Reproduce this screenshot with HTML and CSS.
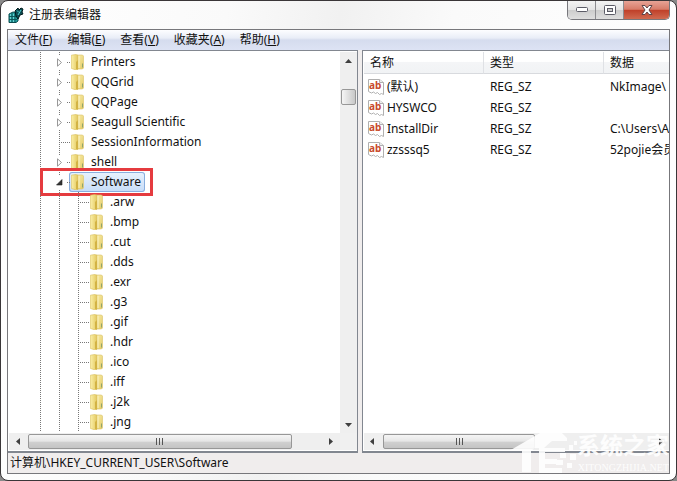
FILE: index.html
```
<!DOCTYPE html>
<html lang="zh-CN">
<head>
  <meta charset="UTF-8">
  <meta name="viewport" content="width=device-width, initial-scale=1.0">
  <title>注册表编辑器</title>
  <link rel="stylesheet" href="styles.css">
</head>
<body>
  <svg class="defs" aria-hidden="true">
    <defs>
      <linearGradient id="leaf" x1="0" x2="1" y1="0" y2="0">
        <stop offset="0" stop-color="#fbf0a8"/>
        <stop offset="1" stop-color="#e3c860"/>
      </linearGradient>
      <linearGradient id="cover" x1="0" x2="1" y1="0" y2="1">
        <stop offset="0" stop-color="#f9eeb0"/>
        <stop offset="1" stop-color="#e4cb62"/>
      </linearGradient>
      <symbol id="folder" viewBox="0 0 13 16">
        <path d="M6 1h5.500l1 1v12l-1 1H6z" fill="url(#cover)" stroke="#dcc36a" stroke-width=".6"/>
        <path d="M.4 1.200L5 .4l2 1v13.800L5 16 .4 14.400z" fill="url(#leaf)" stroke="#d8bd5a" stroke-width=".6"/>
        <path d="M5 8l2-2v9.500L5 15z" fill="#d3b344"/>
        <path d="M8 2v12" stroke="#fbf3c0"/>
        <path d="M11.500 9.500v4" stroke="#8fa56c"/>
      </symbol>
      <symbol id="string" viewBox="0 0 16 16">
        <path d="M.5.5h11l4 3v12l-2-1-2 1-2-2-2 1-2-1.500-2 1-3-1.500z" fill="#fff" stroke="#b0b0b0"/>
        <path d="M11.500.5v3h4" fill="#eee" stroke="#b0b0b0"/>
        <text x="1" y="10" class="ab">ab</text>
      </symbol>
      <symbol id="closed" viewBox="0 0 7 9">
        <path d="M1.500 .8v7.400L5.500 4.500z" fill="#fff" stroke="#989898"/>
      </symbol>
      <symbol id="open" viewBox="0 0 7 9">
        <path d="M6 1.500v5.500H.5z" fill="#333" stroke="#222" stroke-width=".6"/>
      </symbol>
    </defs>
  </svg>

  <div class="window">
    <header class="titlebar">
      <svg class="app-icon" viewBox="0 0 16 16" aria-hidden="true">
        <path d="M1 7l4-2 5 1v8l-2 1.500H1z" fill="#23a3a3" stroke="#0a4a4e"/>
        <path d="M1 9.500h8M1 12.500h8M4 6v9M7 6v9" stroke="#0a4a4e" stroke-width=".8"/>
        <path d="M2 8h1M5 8h1M2 11h1M5 11h1M2 14h1M5 14h1" stroke="#a8ffff"/>
        <path d="M7 4l3-3 1 2 2-2 2 1-1 3 1 2-3 1-2 4-2-3z" fill="#0b4e54" stroke="#001a1c"/>
        <path d="M9 3.500l2 2M13 3l-3 5" stroke="#4fd0d0"/>
      </svg>
      <h1 class="title">注册表编辑器</h1>
      <div class="controls">
        <button class="control" aria-label="最小化">
          <svg width="12" height="6" viewBox="0 0 12 6"><rect x=".5" y=".5" width="11" height="4" rx="1" fill="#fff" stroke="#5b5b66"/></svg>
        </button>
        <button class="control" aria-label="最大化">
          <svg width="12" height="10" viewBox="0 0 12 10"><rect x=".5" y=".5" width="11" height="9" rx="1" fill="#fff" stroke="#5b5b66"/><rect x="3.500" y="3.500" width="5" height="3" fill="#ccc" stroke="#5b5b66"/></svg>
        </button>
        <button class="control close" aria-label="关闭">
          <svg width="12" height="10" viewBox="0 0 12 10"><path d="M1 .5h3l2 2.500L8 .5h3L8 5l3 4.500H8L6 7 4 9.500H1L4 5z" fill="#fff" stroke="#5e4548"/></svg>
        </button>
      </div>
    </header>

    <main class="client">
      <nav class="menu">
        <button>文件(<u>F</u>)</button>
        <button>编辑(<u>E</u>)</button>
        <button>查看(<u>V</u>)</button>
        <button>收藏夹(<u>A</u>)</button>
        <button>帮助(<u>H</u>)</button>
      </nav>

      <div class="panes">
        <section class="pane tree-pane">
          <ul class="tree">
            <li><i class="line"></i><i class="line stub"><svg class="toggle"><use href="#closed"/></svg></i><span class="node"><svg class="folder"><use href="#folder"/></svg>Printers</span></li>
            <li><i class="line"></i><i class="line stub"><svg class="toggle"><use href="#closed"/></svg></i><span class="node"><svg class="folder"><use href="#folder"/></svg>QQGrid</span></li>
            <li><i class="line"></i><i class="line stub"><svg class="toggle"><use href="#closed"/></svg></i><span class="node"><svg class="folder"><use href="#folder"/></svg>QQPage</span></li>
            <li><i class="line"></i><i class="line stub"><svg class="toggle"><use href="#closed"/></svg></i><span class="node"><svg class="folder"><use href="#folder"/></svg>Seagull Scientific</span></li>
            <li><i class="line"></i><i class="line stub"></i><span class="node"><svg class="folder"><use href="#folder"/></svg>SessionInformation</span></li>
            <li><i class="line"></i><i class="line stub"><svg class="toggle"><use href="#closed"/></svg></i><span class="node"><svg class="folder"><use href="#folder"/></svg>shell</span></li>
            <li class="current"><i class="line"></i><i class="line stub"><svg class="toggle"><use href="#open"/></svg></i><span class="node selected"><svg class="folder"><use href="#folder"/></svg>Software</span></li>
            <li><i class="line"></i><i class="line"></i><i class="line stub"></i><span class="node"><svg class="folder"><use href="#folder"/></svg>.arw</span></li>
            <li><i class="line"></i><i class="line"></i><i class="line stub"></i><span class="node"><svg class="folder"><use href="#folder"/></svg>.bmp</span></li>
            <li><i class="line"></i><i class="line"></i><i class="line stub"></i><span class="node"><svg class="folder"><use href="#folder"/></svg>.cut</span></li>
            <li><i class="line"></i><i class="line"></i><i class="line stub"></i><span class="node"><svg class="folder"><use href="#folder"/></svg>.dds</span></li>
            <li><i class="line"></i><i class="line"></i><i class="line stub"></i><span class="node"><svg class="folder"><use href="#folder"/></svg>.exr</span></li>
            <li><i class="line"></i><i class="line"></i><i class="line stub"></i><span class="node"><svg class="folder"><use href="#folder"/></svg>.g3</span></li>
            <li><i class="line"></i><i class="line"></i><i class="line stub"></i><span class="node"><svg class="folder"><use href="#folder"/></svg>.gif</span></li>
            <li><i class="line"></i><i class="line"></i><i class="line stub"></i><span class="node"><svg class="folder"><use href="#folder"/></svg>.hdr</span></li>
            <li><i class="line"></i><i class="line"></i><i class="line stub"></i><span class="node"><svg class="folder"><use href="#folder"/></svg>.ico</span></li>
            <li><i class="line"></i><i class="line"></i><i class="line stub"></i><span class="node"><svg class="folder"><use href="#folder"/></svg>.iff</span></li>
            <li><i class="line"></i><i class="line"></i><i class="line stub"></i><span class="node"><svg class="folder"><use href="#folder"/></svg>.j2k</span></li>
            <li><i class="line"></i><i class="line"></i><i class="line stub"></i><span class="node"><svg class="folder"><use href="#folder"/></svg>.jng</span></li>
          </ul>
          <div class="vscroll">
            <span class="arrow"><svg width="7" height="4"><path d="M0 4l3.500-4L7 4z"/></svg></span>
            <span class="thumb"></span>
            <span class="arrow"><svg width="7" height="4"><path d="M0 0l3.500 4L7 0z"/></svg></span>
          </div>
          <div class="hscroll">
            <span class="arrow"><svg width="4" height="7"><path d="M4 0L0 3.500 4 7z"/></svg></span>
            <span class="track"><span class="thumb"><i></i><i></i><i></i></span></span>
            <span class="arrow"><svg width="4" height="7"><path d="M0 0l4 3.500L0 7z"/></svg></span>
          </div>
          <div class="corner"></div>
        </section>

        <section class="pane value-pane">
          <table class="values">
            <thead>
              <tr><th>名称</th><th>类型</th><th>数据</th></tr>
            </thead>
            <tbody>
              <tr><td><span class="name"><svg class="string"><use href="#string"/></svg>(默认)</span></td><td>REG_SZ</td><td>NkImage\</td></tr>
              <tr><td><span class="name"><svg class="string"><use href="#string"/></svg>HYSWCO</span></td><td>REG_SZ</td><td></td></tr>
              <tr><td><span class="name"><svg class="string"><use href="#string"/></svg>InstallDir</span></td><td>REG_SZ</td><td>C:\Users\A</td></tr>
              <tr><td><span class="name"><svg class="string"><use href="#string"/></svg>zzsssq5</span></td><td>REG_SZ</td><td>52pojie会员</td></tr>
            </tbody>
          </table>
          <div class="hscroll">
            <span class="arrow"><svg width="4" height="7"><path d="M4 0L0 3.500 4 7z"/></svg></span>
            <span class="track"><span class="thumb"><i></i><i></i><i></i></span></span>
            <span class="arrow"><svg width="4" height="7"><path d="M0 0l4 3.500L0 7z"/></svg></span>
          </div>
        </section>
      </div>

      <footer class="status">计算机\HKEY_CURRENT_USER\Software</footer>
    </main>

    <div class="watermark">
      <svg class="house" viewBox="0 0 70 50" aria-hidden="true">
        <g fill="#fff">
          <path d="M2 27L47 1l13 13v3H45l-8 7h-9l-4 3v21h-9V27z"/>
          <path d="M32 24h26v4H38v7h12v5H38v4h11v5H32z"/>
          <path d="M53 29h6v5h-6zM49 36h7v5h-7zM60 39h5v5h-5zM49 44h6v5h-6zM62 21h4v5h-4zM67 17h3v4h-3zM63 30h6v6h-6z"/>
        </g>
      </svg>
      <div class="brand">
        <span class="brand-name">系统之家</span>
        <span class="brand-url">XITONGZHIJIA.NET</span>
      </div>
    </div>
  </div>
</body>
</html>
```

FILE: styles.css
```
*, *::before, *::after { box-sizing: border-box; }

body {
  margin: 0;
  background: #8a8a8a;
  color: #111;
  font: 12px/20px "Noto Sans", "Noto Sans CJK SC", sans-serif;
}
button {
  padding: 0;
  border: 0;
  background: none;
  font: inherit;
  color: inherit;
}
ul { list-style: none; margin: 0; padding: 0; }
.defs { position: absolute; width: 0; height: 0; }

.window {
  position: relative;
  display: flex;
  flex-direction: column;
  height: 100vh;
  padding: 0 6px;
  padding-bottom: 6px;
  border: 1px solid #3a3638;
  border-radius: 8px;
  background: linear-gradient(100deg, #fff 0, #fafafa 30%, #f1f1f1 45%, #fafafa 60%, #fff 100%);
}

/* title bar */
.titlebar {
  display: flex;
  flex: none;
  height: 28px;
}
.app-icon { width: 16px; height: 16px; margin: 6px 5px 0 1px; }
.title {
  flex: 1;
  margin: 4px 0 0;
  font-size: 12px;
  line-height: 20px;
  font-weight: normal;
}
.controls {
  display: flex;
  height: 19px;
  border: 1px solid #77777c;
  border-top: 0;
  border-radius: 0 0 5px 5px;
  overflow: hidden;
}
.control {
  display: flex;
  align-items: center;
  justify-content: center;
  width: 28px;
  border-right: 1px solid #8c8c90;
  background: linear-gradient(#f3f3f3 0, #e4e4e4 48%, #cdcdcd 52%, #dedede 100%);
}
.control.close {
  width: 45px;
  border-right: 0;
  background: linear-gradient(#e7a396 0, #d77c69 46%, #c0412a 52%, #d06a50 100%);
}

/* client area */
.client {
  display: flex;
  flex: 1;
  flex-direction: column;
  min-height: 0;
  border: 1px solid #77777b;
  background: #f0eded;
}
.menu {
  display: flex;
  flex: none;
  gap: 1px;
  height: 20px;
  background: linear-gradient(#fdfdff 0, #e9edf7 40%, #d5dcee 50%, #dde3f4 100%);
}
.menu button { padding: 0 7px; }
.panes {
  display: flex;
  flex: 1;
  gap: 4px;
  min-height: 0;
}
.pane {
  display: grid;
  min-width: 0;
  padding: 1px 0 1px 1px;
  border: 1px solid #828790;
  border-bottom-width: 2px;
  background: #fff;
  overflow: hidden;
}
.tree-pane {
  flex: 350;
  border-left: 0;
  grid-template: minmax(0, 1fr) 17px / minmax(0, 1fr) 17px;
}
.value-pane {
  flex: 307;
  border-right: 0;
  grid-template: minmax(0, 1fr) 17px / minmax(0, 1fr);
}

/* key tree */
.tree { padding-left: 22px; overflow: hidden; }
.tree li {
  position: relative;
  display: flex;
  height: 20px;
}
.line {
  position: relative;
  flex: none;
  width: 19px;
  background: repeating-linear-gradient(#777 0 1px, transparent 1px 2px) 9px 0 / 1px 100% no-repeat;
}
.stub::before {
  content: "";
  position: absolute;
  top: 10px;
  left: 9px;
  right: -2px;
  height: 1px;
  background: repeating-linear-gradient(90deg, #777 0 1px, transparent 1px 2px);
}
/* white box hides the dotted line behind the arrow */
.toggle {
  position: absolute;
  top: 3px;
  left: 6px;
  width: 11px;
  height: 14px;
  padding: 3px 4px 2px 0;
  background: #fff;
}
.node {
  display: flex;
  align-items: center;
  padding: 0 4px 0 2px;
}
.folder { width: 13px; height: 16px; margin-right: 7px; }
.selected {
  border-radius: 3px;
  background: linear-gradient(#e9f2fd, #c6dcf8);
  box-shadow: inset 0 0 0 1px #89aede;
}
.current::after {
  content: "";
  position: absolute;
  top: -4px;
  left: 9px;
  width: 113px;
  height: 28px;
  border: 3px solid #e53b3f;
}

/* scroll bars */
.vscroll,
.hscroll { display: flex; background: #efefef; }
.vscroll { flex-direction: column; }
.arrow {
  display: flex;
  flex: none;
  align-items: center;
  justify-content: center;
  width: 17px;
  height: 17px;
}
.arrow path { fill: #3f3f3f; }
.thumb {
  display: flex;
  align-items: center;
  justify-content: center;
  gap: 2px;
  border: 1px solid #979797;
  border-radius: 2px;
  background: linear-gradient(#f5f5f5 0, #e6e6e6 48%, #d0d0d0 54%, #c4c4c4 100%);
}
.thumb i { width: 1px; height: 7px; background: #555; }
.vscroll .thumb {
  flex: none;
  height: 16px;
  margin: 20px 1px auto;
  background: linear-gradient(90deg, #f5f5f5, #c8c8c8);
}
.track { display: flex; flex: 1; padding: 1px 2px; }
.track .thumb { width: 90%; }
.value-pane .track .thumb { width: 57%; }
.corner { background: #f0f0f0; }

/* value list */
.values {
  width: 100%;
  align-self: start;
  table-layout: fixed;
  border-collapse: separate;
  border-spacing: 0;
}
.values th {
  height: 22px;
  padding: 0 6px;
  border-right: 1px solid #dfe1e5;
  border-bottom: 1px solid #d8dade;
  background: linear-gradient(#fff 0, #fff 45%, #f4f5f7 50%, #f1f3f5 100%);
  font-weight: normal;
  text-align: left;
  line-height: 21px;
}
.values th:nth-child(-n+2) { width: 120px; }
.values th:last-child { border-right: 0; }
.values td {
  height: 21px;
  padding: 0 0 0 6px;
  line-height: 21px;
  white-space: nowrap;
  overflow: hidden;
}
.values td:first-child { padding-left: 4px; }
.values tbody::before { content: ""; display: block; height: 2px; }
.name { display: flex; align-items: center; }
.string { width: 16px; height: 16px; margin-right: 3px; }
.ab { font: bold 10px "Noto Sans", sans-serif; fill: #c84a2c; }

.status { flex: none; height: 20px; padding-left: 2px; }

/* site mark over the lower right corner */
.watermark {
  position: absolute;
  right: 7px;
  bottom: 6px;
  display: flex;
  align-items: flex-end;
  color: #fff;
  opacity: .9;
}
.house { width: 70px; height: 50px; }
.brand {
  display: flex;
  flex-direction: column;
  align-items: flex-end;
}
.brand-name { font-size: 23px; line-height: 34px; font-weight: bold; }
.brand-url { font: 10px/12px "Liberation Serif", serif; }
```
